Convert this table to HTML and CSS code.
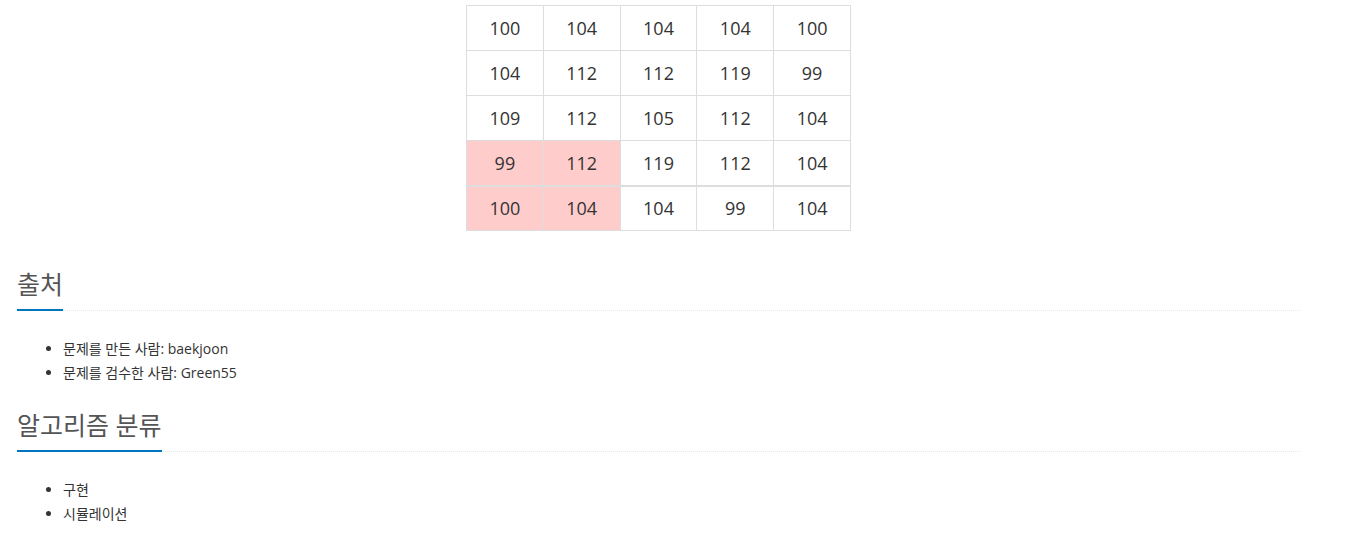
FILE: index.html
```html
<!DOCTYPE html>
<html lang="ko">
<head>
<meta charset="utf-8">
<title>문제</title>
<link rel="stylesheet" href="styles.css">
</head>
<body>
<div class="container">
  <div class="table-wrap">
    <table class="grid">
      <tbody>
        <tr><td>100</td><td>104</td><td>104</td><td>104</td><td>100</td></tr>
        <tr><td>104</td><td>112</td><td>112</td><td>119</td><td>99</td></tr>
        <tr><td>109</td><td>112</td><td>105</td><td>112</td><td>104</td></tr>
        <tr><td class="hl">99</td><td class="hl">112</td><td>119</td><td>112</td><td>104</td></tr>
      </tbody>
      <tbody class="last">
        <tr><td class="hl">100</td><td class="hl">104</td><td>104</td><td>99</td><td>104</td></tr>
      </tbody>
    </table>
  </div>

  <section class="section">
    <div class="headline"><h2>출처</h2></div>
    <ul class="list">
      <li>문제를 만든 사람: baekjoon</li>
      <li>문제를 검수한 사람: Green55</li>
    </ul>
  </section>

  <section class="section">
    <div class="headline"><h2>알고리즘 분류</h2></div>
    <ul class="list">
      <li>구현</li>
      <li>시뮬레이션</li>
    </ul>
  </section>
</div>
</body>
</html>
```

FILE: styles.css
```css
html, body {
  margin: 0;
  padding: 0;
  background: #fff;
}

body {
  font-family: "Open Sans", "Noto Sans CJK KR", sans-serif;
  color: #333;
  font-size: 14px;
}

.container {
  width: 1283px;
  padding: 5px 0 0 17px;
}

.table-wrap {
  display: flex;
  justify-content: center;
}

.grid {
  border-collapse: collapse;
  table-layout: fixed;
  width: 385px;
  font-size: 18px;
  color: #333;
}

.grid td {
  height: 43px;
  padding: 0 0 1px 0;
  text-align: center;
  vertical-align: middle;
  border: 1px solid #ddd;
  line-height: 24px;
}

.grid tbody + tbody {
  border-top: 2px solid #ddd;
}

.grid .last td {
  height: 42px;
}

.grid td.hl {
  background: #ffcccc;
}

.section {
  margin-top: 25px;
}

.section:first-of-type {
  margin-top: 38px;
}

.headline {
  border-bottom: 1px dotted #e4e9f0;
  line-height: 0;
}

.headline h2 {
  display: inline-block;
  margin: 0 0 -1px 0;
  padding-bottom: 10px;
  font-size: 25px;
  line-height: 30px;
  font-weight: 400;
  color: #555;
  border-bottom: 2px solid #0076c0;
}

.list {
  margin: 26px 0 0 0;
  padding-left: 46px;
  line-height: 24px;
}
```
